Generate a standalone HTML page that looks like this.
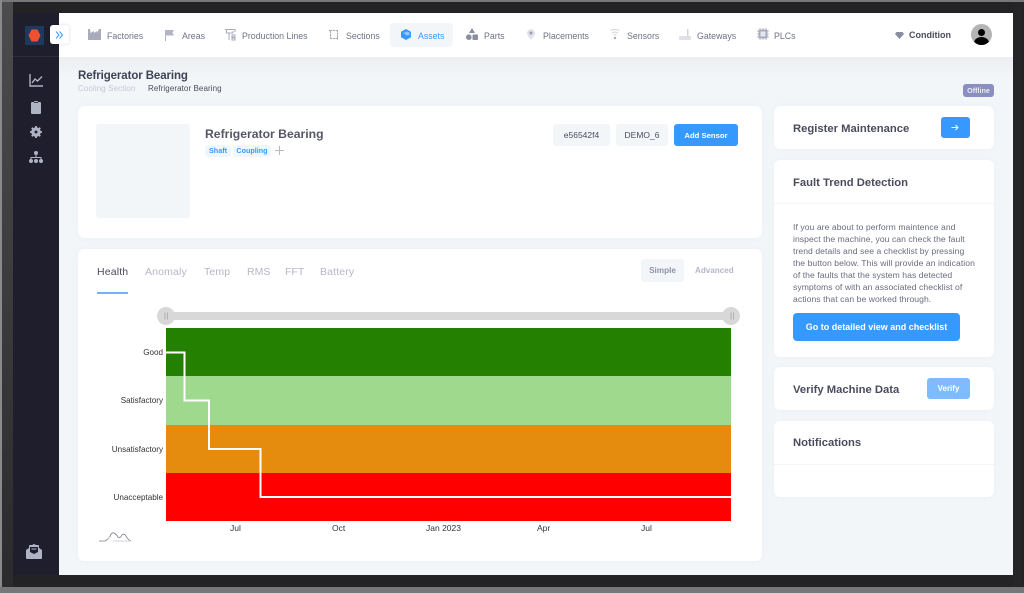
<!DOCTYPE html>
<html><head><meta charset="utf-8"><style>
html,body{margin:0;padding:0;width:1024px;height:593px;overflow:hidden;background:#77777a}
*{box-sizing:border-box}
#r{position:absolute;left:0;top:0;width:1024px;height:593px;overflow:hidden;font-family:"Liberation Sans",sans-serif;filter:blur(.35px);background:#232326}
.a{position:absolute}
.t{position:absolute;white-space:nowrap;line-height:1}
.card{position:absolute;background:#fff;border-radius:6px;box-shadow:0 0 6px rgba(200,210,225,.18)}
.n{font-size:8.8px;color:#6e7386;top:32px}
svg{position:absolute;overflow:visible}
.btn{position:absolute;background:#3699ff;border-radius:3px;color:#fff;text-align:center}
.h{font-size:11.25px;font-weight:bold;color:#4a4c5e}
.tab{font-size:10.5px;color:#b5b7c8;top:267px;letter-spacing:.15px}
.y{font-size:8.1px;color:#333;text-align:right;width:70px;left:93px}
.x{font-size:8.5px;color:#333;top:524px}
.p{font-size:8.6px;color:#696c7e;left:793px;letter-spacing:.06px}
</style></head><body><div id="r">
<div class="a" style="left:0;top:0;width:1024px;height:2px;background:#77777a"></div>
<div class="a" style="left:0;top:0;width:2px;height:593px;background:#8a8a8c"></div>
<div class="a" style="left:2px;top:2px;width:11px;height:585px;background:linear-gradient(#4c4c4e,#2b2b2e)"></div>
<div class="a" style="left:0;top:587px;width:1024px;height:6px;background:#77777a"></div>
<div class="a" style="left:1013px;top:2px;width:10px;height:585px;background:#252528"></div>
<!-- sidebar -->
<div class="a" style="left:13px;top:13px;width:46px;height:562px;background:#1e1e2d"></div>
<div class="a" style="left:13px;top:56px;width:46px;height:1px;background:#2b2b3a"></div>
<div class="a" style="left:25px;top:26px;width:19px;height:19px;background:#1c3a5e"></div>
<svg style="left:28px;top:29px" width="13" height="13" viewBox="0 0 13 13"><path d="M3.500 .5H9.500L12.500 6.500L9.500 12.500H3.500L.5 6.500Z" fill="#f0502f"/></svg>
<svg style="left:29px;top:74px" width="14" height="13" viewBox="0 0 14 13" fill="none" stroke="#b0b3c4" stroke-width="1.400"><path d="M1 0V12H14"/><path d="M3 9L6 5L8.500 7L13 2.500"/></svg>
<svg style="left:31px;top:100px" width="10" height="14" viewBox="0 0 10 14"><path d="M1 2H3.200V1H6.800V2H9Q10 2 10 3V13Q10 14 9 14H1Q0 14 0 13V3Q0 2 1 2Z" fill="#b0b3c4"/><path d="M3 2.500H7" stroke="#1e1e2d" stroke-width=".8"/></svg>
<svg style="left:30px;top:126px" width="12" height="12" viewBox="0 0 12 12"><circle cx="6" cy="6" r="3.600" fill="none" stroke="#b0b3c4" stroke-width="2.400"/><path d="M6 0V12M0 6H12M1.800 1.800L10.200 10.200M10.200 1.800L1.800 10.200" stroke="#b0b3c4" stroke-width="1.800"/><circle cx="6" cy="6" r="1.500" fill="#1e1e2d"/></svg>
<svg style="left:29px;top:151px" width="14" height="12" viewBox="0 0 14 12"><circle cx="7" cy="2" r="2" fill="#b0b3c4"/><path d="M7 4V7M2 9V6.500H12V9" fill="none" stroke="#b0b3c4"/><circle cx="2" cy="10" r="2" fill="#b0b3c4"/><circle cx="7" cy="10" r="2" fill="#b0b3c4"/><circle cx="12" cy="10" r="2" fill="#b0b3c4"/></svg>
<svg style="left:26px;top:544px" width="16" height="15" viewBox="0 0 16 15"><path d="M0 6L3 4V2Q3 1 4 1H6L8 0L10 1H12Q13 1 13 2V4L16 6V14Q16 15 15 15H1Q0 15 0 14Z" fill="#b0b3c4"/><path d="M4 3H12V8L8 10L4 8Z" fill="#1e1e2d"/><path d="M5.500 5H10.500" stroke="#b0b3c4"/></svg>
<!-- main -->
<div class="a" style="left:59px;top:13px;width:954px;height:562px;background:#f3f6f9"></div>
<div class="a" style="left:59px;top:57px;width:954px;height:20px;background:linear-gradient(#eceef2,#f3f6f9)"></div>
<div class="a" style="left:59px;top:13px;width:954px;height:44px;background:#fff"></div>
<div class="a" style="left:50px;top:25px;width:19px;height:19px;background:#fff;border-radius:3px;box-shadow:0 0 3px rgba(0,0,0,.15)"></div>
<svg style="left:55px;top:31px" width="9" height="8" viewBox="0 0 9 8" fill="none" stroke="#3699ff" stroke-width="1"><path d="M1 .5L4 4L1 7.500M4.500 .5L7.500 4L4.500 7.500"/></svg>
<!-- nav -->
<svg style="left:88px;top:29px" width="13" height="11" viewBox="0 0 13 11"><path d="M0 0H2L2.500 4L6 2V4L9 2V4L11 0H13V11H0Z" fill="#a9abbd"/></svg><div class="t n" style="left:107px">Factories</div>
<svg style="left:165px;top:30px" width="9" height="11" viewBox="0 0 9 11"><path d="M0 0H9L7.500 2.500L9 5.500H1V11H0Z" fill="#b3b5c5"/></svg><div class="t n" style="left:182px">Areas</div>
<svg style="left:225px;top:29px" width="11" height="12" viewBox="0 0 11 12" fill="none" stroke="#a9abbd"><path d="M0 .5H10V3M1.500 1V4H8V2M4 4V11M7 6H10V8H7ZM7 9H10V11H7Z"/></svg><div class="t n" style="left:242px">Production Lines</div>
<svg style="left:329px;top:30px" width="10" height="10" viewBox="0 0 10 10" fill="none" stroke="#a9abbd"><path d="M0 .5H8.500V10M1.500 0V8.500H8" stroke-dasharray="3 .5"/></svg><div class="t n" style="left:346px">Sections</div>
<div class="a" style="left:390px;top:23px;width:63px;height:24px;background:#f3f6f9;border-radius:4px"></div>
<svg style="left:401px;top:29px" width="10" height="11" viewBox="0 0 10 11"><path d="M5 0L10 2.700V8.300L5 11L0 8.300V2.700Z" fill="#3699ff"/><path d="M2 4L6 2.500L8.500 3.500V6L6 6.500Z" fill="#cfe5ff" opacity=".6"/></svg><div class="t n" style="left:418px;color:#3699ff">Assets</div>
<svg style="left:466px;top:28px" width="12" height="12" viewBox="0 0 12 12" fill="#8b8da1"><path d="M6 0L9 5H3Z"/><circle cx="2.800" cy="9.200" r="2.800"/><rect x="6.500" y="6.500" width="5.500" height="5.500" rx="1"/></svg><div class="t n" style="left:484px">Parts</div>
<svg style="left:527px;top:29px" width="8" height="11" viewBox="0 0 8 11"><path d="M4 11L.7 6.500A4 4 0 1 1 7.300 6.500Z" fill="#e0e2ea"/><circle cx="4" cy="4" r="1.500" fill="#9a9cb0"/></svg><div class="t n" style="left:543px">Placements</div>
<svg style="left:610px;top:29px" width="10" height="11" viewBox="0 0 10 11" fill="none" stroke="#d2d4de"><path d="M.5 1.500Q5 -.5 9.500 1.500M2 3.800Q5 2.500 8 3.800M3.500 6Q5 5.200 6.500 6"/><circle cx="5" cy="9" r="1.200" fill="#a9abbd" stroke="none"/></svg><div class="t n" style="left:627px">Sensors</div>
<svg style="left:679px;top:28px" width="12" height="12" viewBox="0 0 12 12"><rect x="0" y="8" width="12" height="4" rx="1" fill="#dfe1e8"/><rect x="8" y="1" width="1.500" height="8" fill="#d2d4de"/></svg><div class="t n" style="left:697px">Gateways</div>
<svg style="left:757px;top:28px" width="12" height="12" viewBox="0 0 12 12"><path d="M3 0V12M6 0V12M9 0V12M0 3H12M0 6H12M0 9H12" stroke="#a9abbd" stroke-width=".8"/><rect x="1.500" y="1.500" width="9" height="9" rx="1" fill="#a9abbd"/><rect x="3.500" y="3.500" width="5" height="5" fill="#e6e7ee"/></svg><div class="t n" style="left:774px">PLCs</div>
<svg style="left:895px;top:32px" width="9" height="7" viewBox="0 0 9 7"><path d="M1.500 0H7.500L9 2L4.500 7L0 2Z" fill="#8b8da1"/></svg><div class="t" style="left:909px;top:31px;font-size:9px;font-weight:bold;color:#4a4c5e">Condition</div>
<div class="a" style="left:971px;top:24px;width:21px;height:21px;border-radius:50%;background:#b4b4b4;overflow:hidden"><div class="a" style="left:7px;top:5px;width:7px;height:7px;border-radius:50%;background:#000"></div><div class="a" style="left:3px;top:13px;width:15px;height:12px;border-radius:50%;background:#000"></div></div>
<!-- heading -->
<div class="t" style="left:78px;top:71px;font-size:11.500px;font-weight:bold;color:#3f4254;letter-spacing:-.1px">Refrigerator Bearing</div>
<div class="t" style="left:78px;top:85px;font-size:8px;color:#c5c7d3;letter-spacing:.1px">Cooling Section</div>
<div class="t" style="left:148px;top:85px;font-size:8px;color:#4a4c5e;letter-spacing:.08px">Refrigerator Bearing</div>
<div class="a" style="left:963px;top:84px;width:31px;height:13px;background:#8a8fbf;border-radius:3px;color:#e9e9f5;font-size:7.200px;font-weight:bold;text-align:center;line-height:13px">Offline</div>
<!-- asset card -->
<div class="card" style="left:78px;top:106px;width:684px;height:132px"></div>
<div class="a" style="left:96px;top:124px;width:94px;height:94px;background:#f3f6f9;border-radius:3px"></div>
<div class="t" style="left:205px;top:128px;font-size:12.200px;font-weight:bold;color:#555768">Refrigerator Bearing</div>
<div class="a" style="left:205px;top:145px;width:26px;height:12px;background:#eef6ff;border-radius:3px;color:#3699ff;font-size:7.200px;font-weight:bold;text-align:center;line-height:12px">Shaft</div>
<div class="a" style="left:233px;top:145px;width:38px;height:12px;background:#eef6ff;border-radius:3px;color:#3699ff;font-size:7.200px;font-weight:bold;text-align:center;line-height:12px">Coupling</div>
<svg style="left:275px;top:146px" width="9" height="9" viewBox="0 0 9 9"><path d="M4.500 0V9M0 4.500H9" stroke="#b5b7c3"/></svg>
<div class="a" style="left:553px;top:124px;width:57px;height:22px;background:#f3f6f9;border-radius:3px;color:#4a4c5e;font-size:8.500px;text-align:center;line-height:22px">e56542f4</div>
<div class="a" style="left:616px;top:124px;width:52px;height:22px;background:#f3f6f9;border-radius:3px;color:#4a4c5e;font-size:8.500px;text-align:center;line-height:22px">DEMO_6</div>
<div class="btn" style="left:674px;top:124px;width:64px;height:22px;font-size:7.700px;font-weight:bold;line-height:23px">Add Sensor</div>
<!-- chart card -->
<div class="card" style="left:78px;top:249px;width:684px;height:312px"></div>
<div class="t tab" style="left:97px;color:#4a4c5e">Health</div>
<div class="t tab" style="left:145px">Anomaly</div>
<div class="t tab" style="left:204px">Temp</div>
<div class="t tab" style="left:247px;letter-spacing:0">RMS</div>
<div class="t tab" style="left:285px;letter-spacing:0">FFT</div>
<div class="t tab" style="left:320px">Battery</div>
<div class="a" style="left:97px;top:292px;width:31px;height:2px;background:#6eb4ff"></div>
<div class="a" style="left:641px;top:259px;width:43px;height:23px;background:#f3f6f9;border-radius:3px;color:#8f91a6;font-size:8.200px;font-weight:bold;text-align:center;line-height:24px">Simple</div>
<div class="t" style="left:695px;top:267px;font-size:8.100px;font-weight:bold;color:#b5b7c8">Advanced</div>
<!-- slider -->
<div class="a" style="left:167px;top:312px;width:564px;height:8px;background:#d8d8d8"></div>
<div class="a" style="left:157px;top:307px;width:18px;height:18px;border-radius:50%;background:#d8d8d8"></div>
<div class="a" style="left:722px;top:307px;width:18px;height:18px;border-radius:50%;background:#d8d8d8"></div>
<svg style="left:157px;top:307px" width="583" height="18"><path d="M8 5.500V12.500M10.500 5.500V12.500M574 5.500V12.500M576.500 5.500V12.500" stroke="#a8a8a8" stroke-width=".8"/></svg>
<!-- chart -->
<div class="a" style="left:166px;top:328px;width:565px;height:48px;background:#238000"></div>
<div class="a" style="left:166px;top:376px;width:565px;height:49px;background:#9ed98d"></div>
<div class="a" style="left:166px;top:425px;width:565px;height:48px;background:#e58b0e"></div>
<div class="a" style="left:166px;top:473px;width:565px;height:48px;background:#ff0000"></div>
<svg style="left:0;top:0" width="1024" height="593"><path d="M166 352.500H184.500V400.500H209V449H260.500V497H731" fill="none" stroke="#fff" stroke-width="2"/></svg>
<div class="t y" style="top:349px">Good</div>
<div class="t y" style="top:397px">Satisfactory</div>
<div class="t y" style="top:446px">Unsatisfactory</div>
<div class="t y" style="top:494px">Unacceptable</div>
<div class="t x" style="left:230px">Jul</div>
<div class="t x" style="left:332px">Oct</div>
<div class="t x" style="left:426px">Jan 2023</div>
<div class="t x" style="left:537px">Apr</div>
<div class="t x" style="left:641px">Jul</div>
<svg style="left:99px;top:532px" width="33" height="10" viewBox="0 0 33 10" fill="none"><path d="M0 9H6Q9 8 11 4Q13 0 15 1Q17 2 19 5Q21 7 23 3Q25 1 27 4Q29 8 32 9" stroke="#77798a" stroke-width=".8"/><path d="M5 9Q9 7 12 4M14 9H32" stroke="#c4c5cf" stroke-width=".8"/></svg>
<!-- right cards -->
<div class="card" style="left:774px;top:106px;width:220px;height:43px"></div>
<div class="t h" style="left:793px;top:124px">Register Maintenance</div>
<div class="btn" style="left:941px;top:117px;width:29px;height:21px"></div>
<svg style="left:951px;top:124px" width="8" height="7" viewBox="0 0 8 7" fill="none" stroke="#fff"><path d="M.5 3.500H7M4.500 1L7 3.500L4.500 6"/></svg>
<div class="card" style="left:774px;top:160px;width:220px;height:197px"></div>
<div class="t h" style="left:793px;top:178px">Fault Trend Detection</div>
<div class="a" style="left:774px;top:203px;width:220px;height:1px;background:#f3f5f8"></div>
<div class="t p" style="top:223px">If you are about to perform maintence and</div>
<div class="t p" style="top:235px">inspect the machine, you can check the fault</div>
<div class="t p" style="top:247px">trend details and see a checklist by pressing</div>
<div class="t p" style="top:259px">the button below. This will provide an indication</div>
<div class="t p" style="top:271px">of the faults that the system has detected</div>
<div class="t p" style="top:283px">symptoms of with an associated checklist of</div>
<div class="t p" style="top:295px">actions that can be worked through.</div>
<div class="btn" style="left:793px;top:313px;width:167px;height:28px;font-size:9px;line-height:29px;font-weight:bold;border-radius:4px">Go to detailed view and checklist</div>
<div class="card" style="left:774px;top:367px;width:220px;height:43px"></div>
<div class="t h" style="left:793px;top:385px">Verify Machine Data</div>
<div class="btn" style="left:927px;top:378px;width:43px;height:21px;background:#7fbcff;font-size:8px;font-weight:bold;line-height:21px">Verify</div>
<div class="card" style="left:774px;top:421px;width:220px;height:76px"></div>
<div class="t h" style="left:793px;top:438px">Notifications</div>
<div class="a" style="left:774px;top:464px;width:220px;height:1px;background:#f3f5f8"></div>
</div></body></html>
